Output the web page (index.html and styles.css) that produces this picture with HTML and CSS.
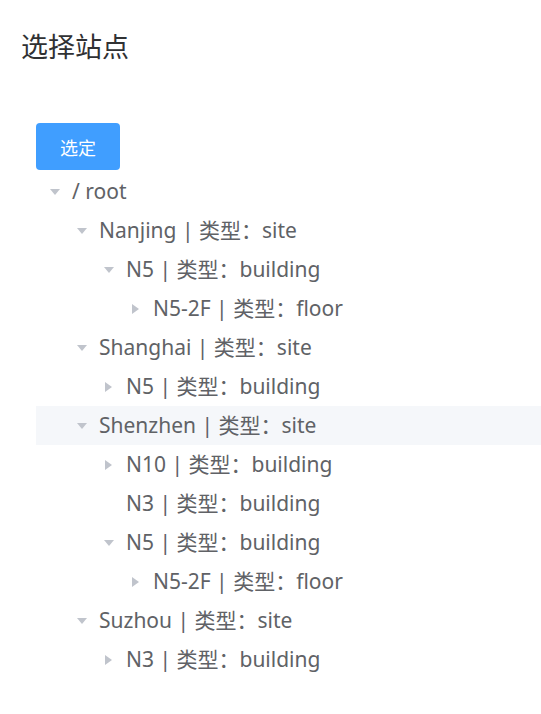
FILE: index.html
```html
<!DOCTYPE html>
<html lang="zh">
<head>
<meta charset="utf-8">
<link rel="stylesheet" href="styles.css">
</head>
<body>
<div class="page">
  <h2 class="title">选择站点</h2>
  <div class="panel">
    <button class="btn">选定</button>
    <div class="tree">
      <div class="node"><span class="caret open"></span><span class="label">/ root</span></div>
      <div class="node l1"><span class="caret open"></span><span class="label">Nanjing | 类型：site</span></div>
      <div class="node l2"><span class="caret open"></span><span class="label">N5 | 类型：building</span></div>
      <div class="node l3"><span class="caret"></span><span class="label">N5-2F | 类型：floor</span></div>
      <div class="node l1"><span class="caret open"></span><span class="label">Shanghai | 类型：site</span></div>
      <div class="node l2"><span class="caret"></span><span class="label">N5 | 类型：building</span></div>
      <div class="node l1 hover"><span class="caret open"></span><span class="label">Shenzhen | 类型：site</span></div>
      <div class="node l2"><span class="caret"></span><span class="label">N10 | 类型：building</span></div>
      <div class="node l2"><span class="caret leaf"></span><span class="label">N3 | 类型：building</span></div>
      <div class="node l2"><span class="caret open"></span><span class="label">N5 | 类型：building</span></div>
      <div class="node l3"><span class="caret"></span><span class="label">N5-2F | 类型：floor</span></div>
      <div class="node l1"><span class="caret open"></span><span class="label">Suzhou | 类型：site</span></div>
      <div class="node l2"><span class="caret"></span><span class="label">N3 | 类型：building</span></div>
    </div>
  </div>
</div>
</body>
</html>
```

FILE: styles.css
```css
* { box-sizing: border-box; }
html, body { margin: 0; padding: 0; background: #fff; }
body {
  font-family: "Noto Sans", "Noto Sans CJK SC", sans-serif;
  color: #606266;
}
.page { padding: 0 0 0 21px; }
.title {
  margin: 0;
  padding-top: 29px;
  height: 123px;
  font-size: 27px;
  line-height: 36px;
  font-weight: 400;
  color: #303133;
}
.panel { padding-left: 15px; }
.btn {
  display: block;
  width: 84px;
  height: 47px;
  border: 0;
  border-radius: 4px;
  background: #409eff;
  color: #fff;
  font-family: "Noto Sans CJK SC", sans-serif;
  font-size: 18px;
  padding: 0;
  margin-bottom: 2px;
}
.tree { display: flex; flex-direction: column; }
.node {
  display: flex;
  align-items: center;
  height: 39px;
  font-size: 21px;
}
.node.l1 { padding-left: 27px; }
.node.l2 { padding-left: 54px; }
.node.l3 { padding-left: 81px; }
.node.hover { background: #f5f7fa; }
.caret {
  width: 36px;
  height: 39px;
  flex: none;
  position: relative;
}
.caret::before {
  content: "";
  position: absolute;
  left: 15px;
  top: 15px;
  border-style: solid;
  border-width: 5px 0 5px 7px;
  border-color: transparent transparent transparent #c0c4cc;
}
.caret.open::before {
  left: 14px;
  top: 17px;
  border-width: 6px 5px 0 5px;
  border-color: #c0c4cc transparent transparent transparent;
}
.caret.leaf::before { display: none; }
.label { white-space: nowrap; line-height: 1; }
```
